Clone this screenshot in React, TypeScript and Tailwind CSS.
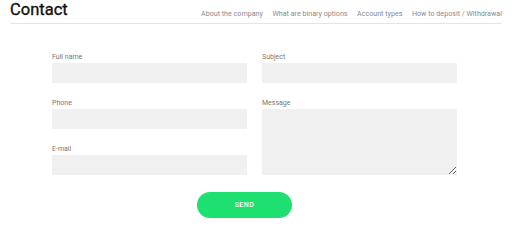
import React from "react";

const font = { fontFamily: "Roboto, 'Liberation Sans', sans-serif" };

function Field({ label, tall = false }: { label: string; tall?: boolean }) {
  return (
    <div className="flex flex-col">
      <label className="text-[7px] leading-[9px] text-[#777] mb-[1px]">{label}</label>
      {tall ? (
        <textarea className="w-full h-[66px] bg-[#f0f0f0] outline-none border-0 resize-y block" />
      ) : (
        <input className="w-full h-[20px] bg-[#f0f0f0] outline-none border-0 block" />
      )}
    </div>
  );
}

export default function App() {
  return (
    <div className="w-[512px] h-[229px] bg-white overflow-hidden" style={font}>
      <div className="mx-[10px] border-b border-[#e4e4e4] flex items-end justify-between h-[24px]">
        <h1 className="text-[16.5px] leading-[20px] font-normal text-[#111] [-webkit-text-stroke:0.35px_#111] pb-[3px]">Contact</h1>
        <nav className="flex gap-[9.5px] text-[7.15px] leading-[10px] text-[#8a8a8a] pb-[4px]">
          <span>About the company</span>
          <span>What are binary options</span>
          <span>Account types</span>
          <span>How to deposit / Withdrawal</span>
        </nav>
      </div>
      <div className="ml-[52px] w-[405px] mt-[29px] grid grid-cols-2 gap-x-[15px]">
        <div className="flex flex-col gap-[16px]">
          <Field label="Full name" />
          <Field label="Phone" />
          <Field label="E-mail" />
        </div>
        <div className="flex flex-col gap-[16px]">
          <Field label="Subject" />
          <Field label="Message" tall />
        </div>
      </div>
      <div className="flex mt-[17px]">
        <button className="ml-[197px] w-[95px] h-[26px] rounded-full bg-[#1de070] text-white text-[7px] font-medium tracking-[0.5px]">
          SEND
        </button>
      </div>
    </div>
  );
}
